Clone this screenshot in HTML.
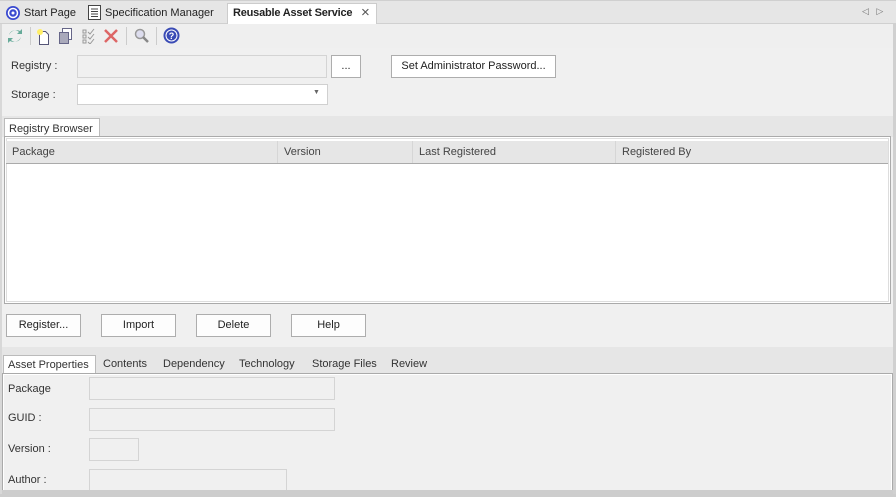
<!DOCTYPE html>
<html><head><meta charset="utf-8"><style>
*{box-sizing:border-box;margin:0;padding:0}
body{width:896px;height:497px;overflow:hidden;background:#f0f0f0;font-family:"Liberation Sans",sans-serif;font-size:11px;color:#222;position:relative;white-space:nowrap}
.a{position:absolute}
.btn{position:absolute;background:#fdfdfd;border:1px solid #adadad;text-align:center;line-height:21px;font-size:11px}
.inp{position:absolute;border:1px solid #d4d4d4;background:#f0f0f0}
.lbl{position:absolute;font-size:11px;color:#333}
.hd{position:absolute;top:0;height:22px;line-height:22px;padding-left:6px;color:#444;border-right:1px solid #d6d6d6}
</style></head><body>
<div class="a" style="left:0;top:0;width:896px;height:24px;background:#e6e6e6;border-top:1px solid #d0d0d0;border-bottom:1px solid #d0d0d0"></div>
<svg class="a" style="left:5px;top:5px" width="16" height="16" viewBox="0 0 16 16"><circle cx="8" cy="8" r="7" fill="#3b4bd0"/><circle cx="8" cy="8" r="4.5" fill="none" stroke="#fff" stroke-width="1.5"/><circle cx="8" cy="8" r="1.5" fill="#fff"/></svg>
<div class="a" style="left:24px;top:7px">Start Page</div>
<svg class="a" style="left:88px;top:5px" width="13" height="15" viewBox="0 0 13 15"><rect x=".5" y=".5" width="12" height="14" fill="#fff" stroke="#444"/><path d="M3 4h7M3 6.5h7M3 9h7M3 11.5h7" stroke="#444"/></svg>
<div class="a" style="left:105px;top:7px">Specification Manager</div>
<div class="a" style="left:227px;top:3px;width:150px;height:22px;background:#fff;border:1px solid #ccc;border-bottom:none"></div>
<div class="a" style="left:233px;top:7px;font-weight:bold;letter-spacing:-0.2px">Reusable Asset Service</div>
<div class="a" style="left:361px;top:4px;font-size:15px;color:#555">×</div>
<div class="a" style="left:862px;top:6px;font-size:9px;color:#777">◁&nbsp;&nbsp;&nbsp;▷</div>
<div class="a" style="left:0;top:24px;width:896px;height:24px;background:#efefef"></div>
<svg class="a" style="left:6px;top:27px" width="18" height="18" viewBox="0 0 18 18"><path d="M3 8a6 6 0 0 1 10-3l-2 2h5V2l-2 2A8 8 0 0 0 3 8z" fill="#6a9"/><path d="M15 10a6 6 0 0 1-10 3l2-2H2v5l2-2a8 8 0 0 0 11-4z" fill="#6a9"/></svg>
<div class="a" style="left:30px;top:27px;width:1px;height:18px;background:#ccc"></div>
<svg class="a" style="left:36px;top:28px" width="14" height="17"><path d="M3.5 3.5h6l3 3v10h-9z" fill="#fff" stroke="#557"/><circle cx="4" cy="4" r="3" fill="#fe6"/></svg>
<svg class="a" style="left:59px;top:28px" width="14" height="16"><rect x="3.5" y=".5" width="9" height="11" fill="#fff" stroke="#668"/><rect x=".5" y="4.5" width="9" height="11" fill="#aab" stroke="#668"/></svg>
<svg class="a" style="left:82px;top:28px" width="14" height="16"><path d="M1 2h3v3H1zM1 7h3v3H1zM1 12h3v3H1zM6 4l2 2 4-5M6 9l2 2 4-5M6 14l2 2 4-5" fill="none" stroke="#999"/></svg>
<svg class="a" style="left:103px;top:28px" width="16" height="16"><path d="M2 2l12 12M14 2L2 14" stroke="#d66" stroke-width="2.5"/></svg>
<div class="a" style="left:126px;top:27px;width:1px;height:18px;background:#ccc"></div>
<svg class="a" style="left:134px;top:28px" width="16" height="16"><circle cx="6" cy="6" r="4.5" fill="#dde" stroke="#999" stroke-width="1.5"/><path d="M9 9l5 5" stroke="#888" stroke-width="2.5"/></svg>
<div class="a" style="left:156px;top:27px;width:1px;height:18px;background:#ccc"></div>
<svg class="a" style="left:163px;top:27px" width="17" height="17"><circle cx="8.5" cy="8.5" r="8" fill="#3a4bb5"/><circle cx="8.5" cy="8.5" r="5.5" fill="none" stroke="#fff"/><text x="8.5" y="12" font-size="9" font-weight="bold" fill="#fff" text-anchor="middle" font-family="Liberation Sans">?</text></svg>
<div class="lbl" style="left:11px;top:60px">Registry :</div>
<div class="inp" style="left:77px;top:55px;width:250px;height:23px"></div>
<div class="btn" style="left:331px;top:55px;width:30px;height:23px;background:#fff">...</div>
<div class="btn" style="left:391px;top:55px;width:165px;height:23px;background:#fff">Set Administrator Password...</div>
<div class="lbl" style="left:11px;top:89px">Storage :</div>
<div class="a" style="left:77px;top:84px;width:251px;height:21px;background:#fff;border:1px solid #d0d0d0"></div>
<div class="a" style="left:313px;top:89px;font-size:7px;color:#666">▼</div>
<div class="a" style="left:0;top:116px;width:893px;height:21px;background:#e6e6e6"></div>
<div class="a" style="left:4px;top:118px;width:96px;height:20px;background:#fff;border:1px solid #bbb;border-bottom:none;padding:4px 0 0 4px;color:#333">Registry Browser</div>
<div class="a" style="left:4px;top:136px;width:887px;height:168px;background:#fff;border:1px solid #aaa;outline:1px solid #ddd;outline-offset:-3px"></div>
<div class="a" style="left:6px;top:141px;width:882px;height:23px;background:#e6e6e6;border-bottom:1px solid #aaa">
<div class="hd" style="left:0;width:272px">Package</div>
<div class="hd" style="left:272px;width:135px">Version</div>
<div class="hd" style="left:407px;width:203px">Last Registered</div>
<div class="hd" style="left:610px;width:272px;border:none">Registered By</div>
</div>
<div class="btn" style="left:6px;top:314px;width:75px;height:23px">Register...</div>
<div class="btn" style="left:101px;top:314px;width:75px;height:23px">Import</div>
<div class="btn" style="left:196px;top:314px;width:75px;height:23px">Delete</div>
<div class="btn" style="left:291px;top:314px;width:75px;height:23px">Help</div>
<div class="a" style="left:0;top:347px;width:893px;height:27px;background:#e6e6e6"></div>
<div class="a" style="left:3px;top:355px;width:93px;height:20px;background:#fff;border:1px solid #bbb;border-bottom:none"></div>
<div class="a" style="left:8px;top:359px;color:#333">Asset Properties</div>
<div class="a" style="left:103px;top:358px;color:#333">Contents</div>
<div class="a" style="left:163px;top:358px;color:#333">Dependency</div>
<div class="a" style="left:239px;top:358px;color:#333">Technology</div>
<div class="a" style="left:312px;top:358px;color:#333">Storage Files</div>
<div class="a" style="left:391px;top:358px;color:#333">Review</div>
<div class="a" style="left:2px;top:373px;width:891px;height:120px;background:#f0f0f0;border:1px solid #aaa;outline:1px solid #fff;outline-offset:-2px"></div>
<div class="lbl" style="left:8px;top:383px">Package</div>
<div class="inp" style="left:89px;top:377px;width:246px;height:23px"></div>
<div class="lbl" style="left:8px;top:412px">GUID :</div>
<div class="inp" style="left:89px;top:408px;width:246px;height:23px"></div>
<div class="lbl" style="left:8px;top:443px">Version :</div>
<div class="inp" style="left:89px;top:438px;width:50px;height:23px"></div>
<div class="lbl" style="left:8px;top:474px">Author :</div>
<div class="inp" style="left:89px;top:469px;width:198px;height:23px"></div>
<div class="a" style="left:0;top:490px;width:896px;height:7px;background:#cdcdcd"></div>
<div class="a" style="left:0;top:24px;width:2px;height:470px;background:#d8d8d8"></div>
<div class="a" style="left:893px;top:24px;width:3px;height:470px;background:#d0d0d0"></div>
</body></html>
